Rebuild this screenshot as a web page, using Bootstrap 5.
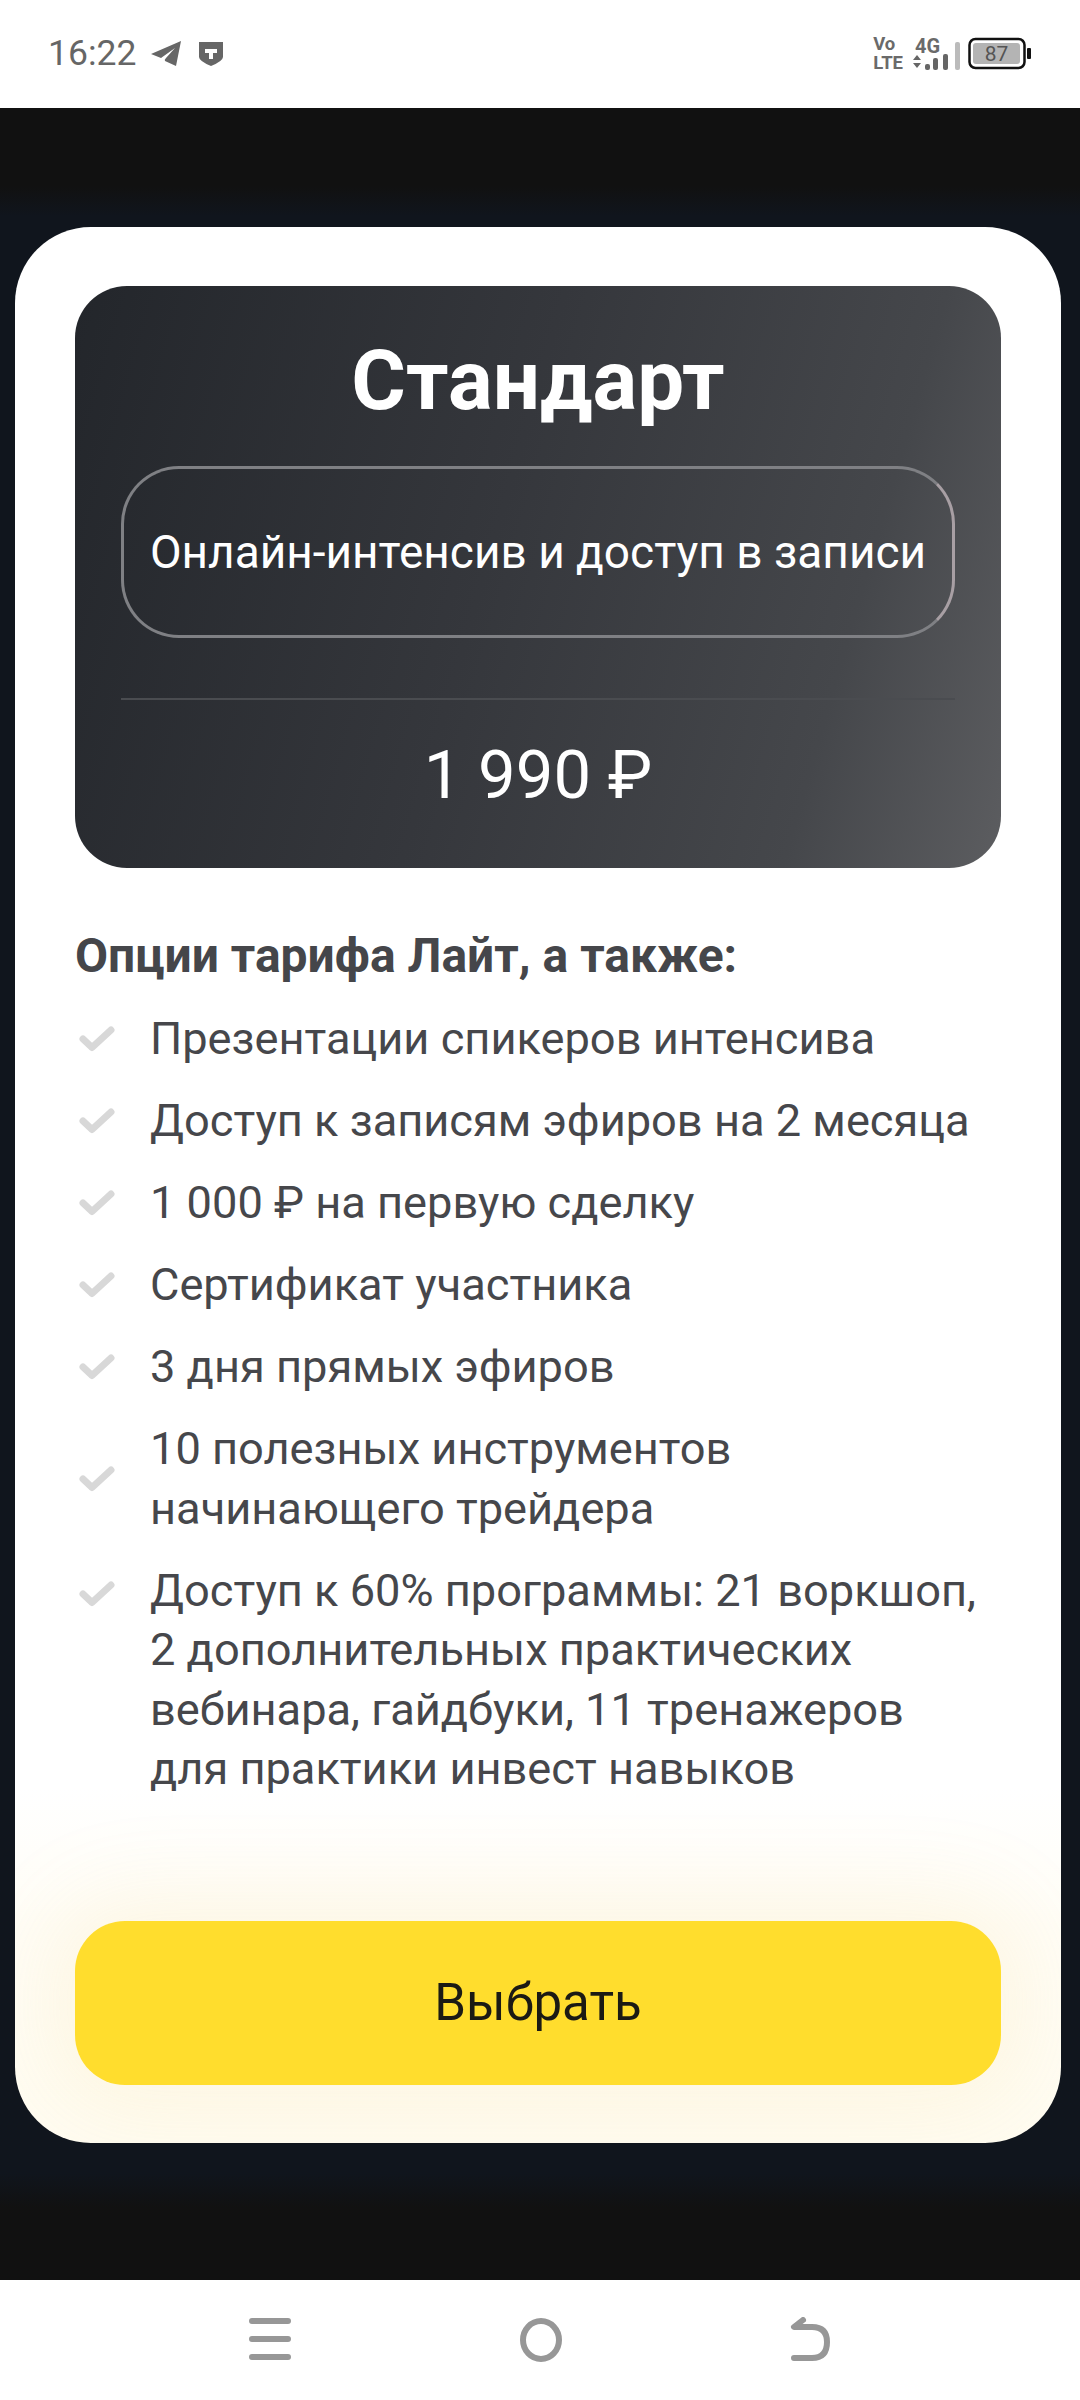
<!DOCTYPE html>
<html lang="ru">
<head>
    <title>Стандарт</title>
    <meta charset="UTF-8">
    <meta name="viewport" content="width=device-width, initial-scale=1.0">
    <link href="https://cdn.jsdelivr.net/npm/bootstrap@5.3.0/dist/css/bootstrap.min.css" rel="stylesheet">
    <style>
        html, body { height: 2400px; }
        body { font-family: Roboto, "Liberation Sans", sans-serif; background: #fff; }
        .phone { width: 1080px; height: 2400px; overflow: hidden; }
        .status-bar { height: 108px; padding: 0 46px 0 48px; color: #666; }
        .status-time { font-size: 35.5px; line-height: 1; }
        .net-text { font-size: 18.5px; line-height: 19px; font-weight: 700; color: #6a6a6a; }
        .net-col { width: 42px; margin-left: 10px; font-size: 20px; line-height: 16px; font-weight: 700; color: #6a6a6a; }
        .net-col span { padding-left: 2px; }
        .net-col svg { display: block; }
        .tg-icon { margin-left: 14px; }
        .shield-icon { margin-left: 16px; }
        .page-bg { height: 2172px; padding-top: 119px; background: linear-gradient(#111 0, #111 78px, #10151d 108px, #10151d 2065px, #111 2100px); }
        .offer { width: 1046px; height: 1916px; margin-left: 15px; padding: 59px 60px 0; border-radius: 76px; background: linear-gradient(#fff 0, #fff 1560px, #fffdf6 1700px, #fffcf1 100%); overflow: hidden; }
        .offer-top { height: 582px; padding: 0 46px; border-radius: 52px; color: #fff; background: linear-gradient(106deg, #23262b 0, #35373c 45%, #45474b 80%, #5c5d60 100%); }
        .offer-title { height: 180px; margin: 0; font-size: 83.5px; font-weight: 700; line-height: 190px; }
        .offer-pill { height: 172px; border-radius: 58px; border: 3px solid #7f8084; border-right-color: #a89fa4; font-size: 46px; line-height: 1; }
        .offer-line { height: 2px; margin-top: 60px; background: #4a4c50; }
        .offer-price { font-size: 67px; line-height: 1; margin-top: 42px; }
        .offer-head { margin: 62px 0 0; font-size: 48px; line-height: 52px; font-weight: 700; color: #45464a; }
        .perk-list-wrap { margin-top: 27px; }
        .perks { margin: 0; padding: 0; list-style: none; color: #46474b; font-size: 45.2px; line-height: 59.5px; }
        .perks li { display: flex; align-items: center; margin-top: 22.5px; }
        .perks li:first-child { margin-top: 0; }
        .perks svg { width: 36px; height: 26px; margin: 0 35px 0 4px; flex: none; }
        .perks li.top-check { align-items: flex-start; }
        .perks li.top-check svg { margin-top: 20px; }
        .pick-btn { display: block; width: 100%; height: 164px; margin-top: 122px; border: 0; border-radius: 50px; background: #ffdd2d; color: #1b1a14; font-size: 51px; line-height: 1; box-shadow: 0 0 90px 24px rgba(240, 200, 110, .13); }
        .nav-bar { height: 120px; padding: 0 248px 0 249px; }
        .nav-bar svg { display: block; }
    </style>
</head>
<body>
    <div class="phone">
        <div class="status-bar d-flex align-items-center justify-content-between">
            <div class="d-flex align-items-center">
                <span class="status-time">16:22</span>
                <svg class="tg-icon" width="32" height="28" viewBox="0 0 32 28"><path d="M1 14 31 1 26 26 15 21Q14 20 16 18L25 8 11 18Z" fill="#666"/></svg>
                <svg class="shield-icon" width="26" height="26" viewBox="0 0 26 26"><path d="M1 1H25V16Q25 20 13 25 1 20 1 16Z" fill="#666"/><path d="M7 8H19V12H15V18H11V12H7Z" fill="#fff"/></svg>
            </div>
            <div class="d-flex align-items-center">
                <div class="net-text">Vo<br>LTE</div>
                <div class="d-flex align-items-end">
                    <div class="net-col">
                        <span>4G</span>
                        <svg width="36" height="16" viewBox="0 0 36 16"><path d="M0 6 4 1 8 6ZM0 9H8L4 14Z" fill="#666"/><rect x="12" y="10" width="5" height="6" rx="2" fill="#666"/><rect x="20" y="4" width="5" height="12" rx="2" fill="#666"/><rect x="30" y="0" width="5" height="16" rx="2" fill="#666"/></svg>
                    </div>
                    <svg width="5" height="28" viewBox="0 0 5 28"><rect width="5" height="28" rx="2" fill="#bbb"/></svg>
                </div>
                <svg class="battery-icon ms-2" width="66" height="36" viewBox="0 0 66 36"><rect x="1.5" y="3" width="55" height="29" rx="6" fill="#fff" stroke="#111" stroke-width="2.500"/><rect x="5" y="7" width="47" height="21" rx="3" fill="#b4b4b4"/><rect x="59" y="12" width="4" height="11" rx="1" fill="#111"/><text x="28.5" y="25" text-anchor="middle" font-family="Roboto, sans-serif" font-size="21" fill="#555">87</text></svg>
            </div>
        </div>

        <div class="page-bg">
            <div class="offer">
                <div class="offer-top text-center">
                    <h1 class="offer-title">Стандарт</h1>
                    <div class="offer-pill d-flex align-items-center justify-content-center">Онлайн-интенсив и доступ в записи</div>
                    <div class="offer-line"></div>
                    <div class="offer-price">1 990 ₽</div>
                </div>

                <p class="offer-head">Опции тарифа Лайт, а также:</p>
                <div class="perk-list-wrap">
                    <ul class="perks">
                        <li><svg viewBox="0 0 36 26"><path d="M4 13 13 21.500 32 4" fill="none" stroke="#d8d8d8" stroke-width="7" stroke-linecap="round" stroke-linejoin="round"/></svg><span>Презентации спикеров интенсива</span></li>
                        <li><svg viewBox="0 0 36 26"><path d="M4 13 13 21.500 32 4" fill="none" stroke="#d8d8d8" stroke-width="7" stroke-linecap="round" stroke-linejoin="round"/></svg><span>Доступ к записям эфиров на 2 месяца</span></li>
                        <li><svg viewBox="0 0 36 26"><path d="M4 13 13 21.500 32 4" fill="none" stroke="#d8d8d8" stroke-width="7" stroke-linecap="round" stroke-linejoin="round"/></svg><span>1 000 ₽ на первую сделку</span></li>
                        <li><svg viewBox="0 0 36 26"><path d="M4 13 13 21.500 32 4" fill="none" stroke="#d8d8d8" stroke-width="7" stroke-linecap="round" stroke-linejoin="round"/></svg><span>Сертификат участника</span></li>
                        <li><svg viewBox="0 0 36 26"><path d="M4 13 13 21.500 32 4" fill="none" stroke="#d8d8d8" stroke-width="7" stroke-linecap="round" stroke-linejoin="round"/></svg><span>3 дня прямых эфиров</span></li>
                        <li><svg viewBox="0 0 36 26"><path d="M4 13 13 21.500 32 4" fill="none" stroke="#d8d8d8" stroke-width="7" stroke-linecap="round" stroke-linejoin="round"/></svg><span>10 полезных инструментов<br>начинающего трейдера</span></li>
                        <li class="top-check"><svg viewBox="0 0 36 26"><path d="M4 13 13 21.500 32 4" fill="none" stroke="#d8d8d8" stroke-width="7" stroke-linecap="round" stroke-linejoin="round"/></svg><span>Доступ к 60% программы: 21 воркшоп,<br>2 дополнительных практических<br>вебинара, гайдбуки, 11 тренажеров<br>для практики инвест навыков</span></li>
                    </ul>
                </div>
                <button type="button" class="pick-btn">Выбрать</button>
            </div>
        </div>

        <div class="nav-bar d-flex justify-content-between align-items-center">
            <svg width="42" height="44" viewBox="0 0 42 44"><path d="M3 3H39M3 21H39M3 39H39" stroke="#979797" stroke-width="6" stroke-linecap="round"/></svg>
            <svg width="42" height="44" viewBox="0 0 42 44"><ellipse cx="21" cy="22" rx="18" ry="19" fill="none" stroke="#979797" stroke-width="6"/></svg>
            <svg width="42" height="46" viewBox="0 0 42 46"><path d="M13 3 4 10H22Q37 10 37 25 37 41 22 41H4" fill="none" stroke="#979797" stroke-width="6" stroke-linecap="round" stroke-linejoin="round"/></svg>
        </div>
    </div>
    <script src="https://cdn.jsdelivr.net/npm/bootstrap@5.3.0/dist/js/bootstrap.bundle.min.js"></script>
</body>
</html>
